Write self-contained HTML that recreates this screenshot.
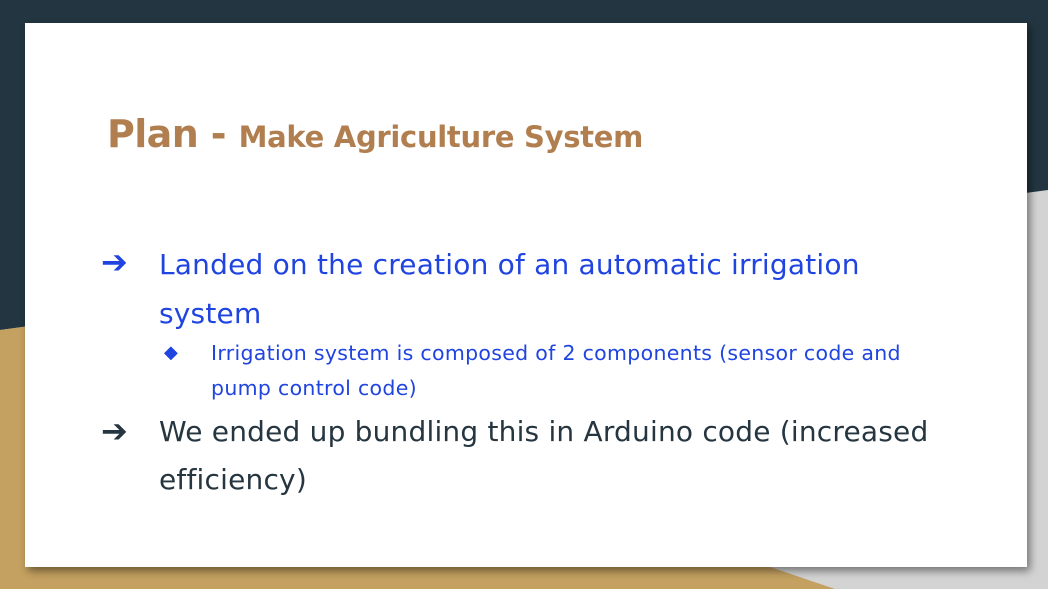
<!DOCTYPE html>
<html><head><style>
html,body{margin:0;padding:0}
body{width:1048px;height:589px;position:relative;overflow:hidden;background:#d3d3d3;font-family:"DejaVu Sans","Liberation Sans",sans-serif}
svg.bg{position:absolute;left:0;top:0}
.card{position:absolute;left:25px;top:23px;width:1002px;height:544px;background:#fff;box-shadow:3px 4px 8px rgba(0,0,0,0.45)}
.t{position:absolute;white-space:nowrap}
</style></head><body>
<svg class="bg" width="1048" height="589">
<polygon points="0,0 1048,0 1048,190 0,330" fill="#223540"/>
<polygon points="0,330 52,323 835,589 0,589" fill="#c4a160"/>
</svg>
<div class="card"></div>
<div class="t" style="left:107px;top:112px;font-size:38px;font-weight:bold;color:#b17f4f;letter-spacing:-0.6px">Plan - <span style="font-size:29px;letter-spacing:-0.3px">Make Agriculture System</span></div>
<div class="t" style="left:101px;top:243px;font-size:32px;color:#1f44e0;font-weight:bold">➔</div>
<div class="t" style="left:159px;top:240px;font-size:28px;color:#1f44e0;line-height:49px;letter-spacing:0.2px">Landed on the creation of an automatic irrigation<br>system</div>
<div class="t" style="left:164px;top:342px;font-size:18px;color:#1f44e0">◆</div>
<div class="t" style="left:211px;top:336px;font-size:20.5px;color:#1f44e0;line-height:35px;letter-spacing:0.3px">Irrigation system is composed of 2 components (sensor code and<br>pump control code)</div>
<div class="t" style="left:101px;top:412px;font-size:32px;color:#263640;font-weight:bold">➔</div>
<div class="t" style="left:159px;top:408px;font-size:28px;color:#263640;line-height:48px;letter-spacing:0.2px">We ended up bundling this in Arduino code (increased<br>efficiency)</div>
</body></html>
